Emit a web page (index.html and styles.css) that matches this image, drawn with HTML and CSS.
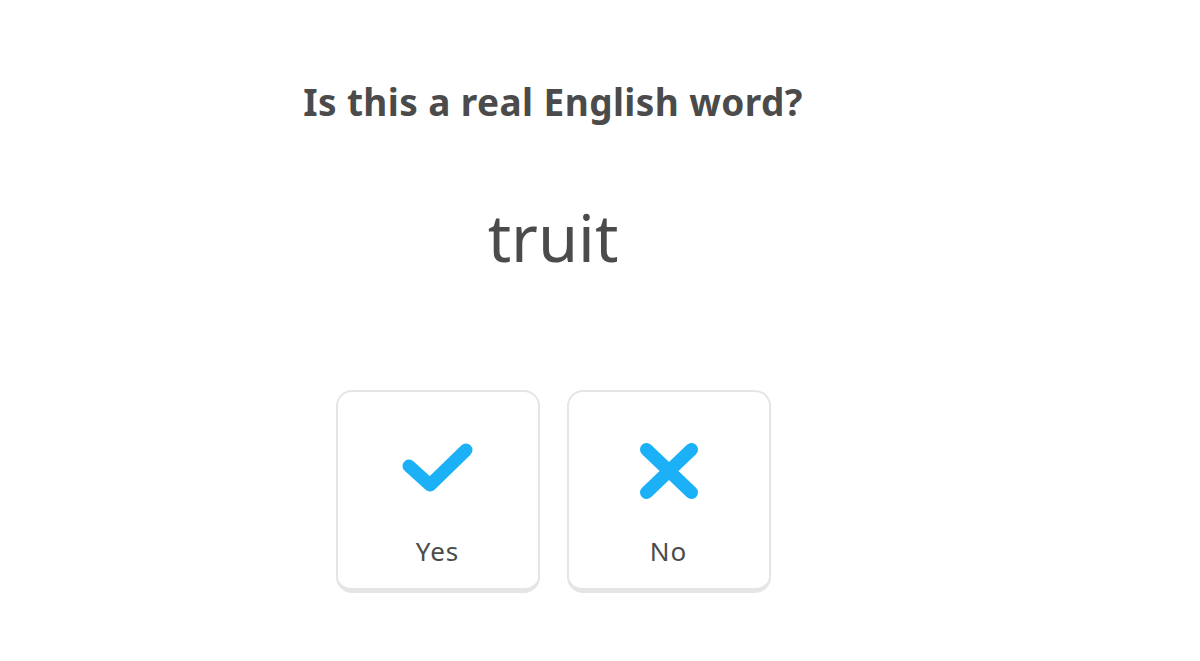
FILE: index.html
```html
<!DOCTYPE html>
<html lang="en">
<head>
    <meta charset="UTF-8">
    <meta name="viewport" content="width=device-width, initial-scale=1.0">
    <title>Is this a real English word?</title>
    <link rel="stylesheet" href="styles.css">
</head>
<body>
    <div class="challenge">
        <h1 class="prompt">Is this a real English word?</h1>

        <div class="word">truit</div>

        <div class="choices">
            <button class="choice" type="button">
                <span class="choice-icon">
                    <svg width="71" height="49" viewBox="0 0 71 49">
                        <path d="M7 23 L28 42 L64 7" fill="none" stroke="#1cb0f6" stroke-width="13" stroke-linecap="round" stroke-linejoin="round"/>
                    </svg>
                </span>
                <span class="choice-label">Yes</span>
            </button>
            <button class="choice" type="button">
                <span class="choice-icon">
                    <svg width="58" height="56" viewBox="0 0 58 56">
                        <path d="M6.5 6.5 L51.5 49.5 M51.5 6.5 L6.5 49.5" fill="none" stroke="#1cb0f6" stroke-width="13" stroke-linecap="round"/>
                    </svg>
                </span>
                <span class="choice-label">No</span>
            </button>
        </div>
    </div>
</body>
</html>
```

FILE: styles.css
```css
body {
    font-family: 'Noto Sans', 'Liberation Sans', sans-serif;
    background-color: #fff;
    color: #4b4b4b;
    margin: 0;
    padding: 0;
}
.challenge {
    display: flex;
    flex-direction: column;
    align-items: center;
    padding-top: 80px;
    padding-right: 94px;
}
.prompt {
    margin: 0;
    font-size: 37px;
    line-height: 43px;
    font-weight: 700;
    letter-spacing: 0.4px;
}
.word {
    margin-top: 82px;
    font-size: 65px;
    line-height: 65px;
    font-weight: 400;
}
.choices {
    display: flex;
    gap: 27px;
    margin-top: 120px;
}
.choice {
    display: flex;
    flex-direction: column;
    align-items: center;
    box-sizing: border-box;
    width: 204px;
    padding: 51px 0 21px;
    background-color: #fff;
    border: 2px solid #e5e5e5;
    border-bottom-width: 5px;
    border-radius: 16px;
    font-family: inherit;
    color: #4b4b4b;
    cursor: pointer;
}
.choice-icon {
    display: flex;
    align-items: flex-start;
    justify-content: center;
    height: 56px;
}
.choice-icon svg {
    display: block;
}
.choice-label {
    margin-top: 36px;
    font-size: 26px;
    line-height: 32px;
    letter-spacing: 1px;
}
```
